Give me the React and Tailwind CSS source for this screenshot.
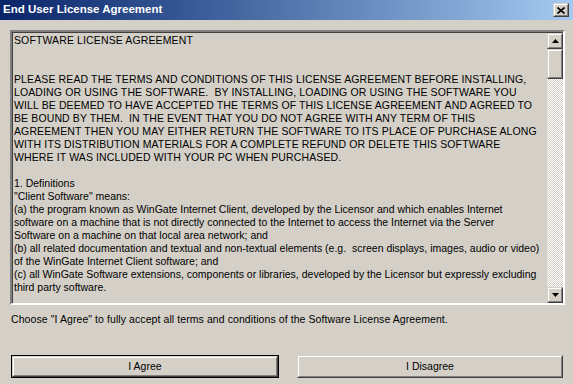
import React from 'react';

const licenseLines = [
  'SOFTWARE LICENSE AGREEMENT',
  '',
  '',
  'PLEASE READ THE TERMS AND CONDITIONS OF THIS LICENSE AGREEMENT BEFORE INSTALLING,',
  'LOADING OR USING THE SOFTWARE.  BY INSTALLING, LOADING OR USING THE SOFTWARE YOU',
  'WILL BE DEEMED TO HAVE ACCEPTED THE TERMS OF THIS LICENSE AGREEMENT AND AGREED TO',
  'BE BOUND BY THEM.  IN THE EVENT THAT YOU DO NOT AGREE WITH ANY TERM OF THIS',
  'AGREEMENT THEN YOU MAY EITHER RETURN THE SOFTWARE TO ITS PLACE OF PURCHASE ALONG',
  'WITH ITS DISTRIBUTION MATERIALS FOR A COMPLETE REFUND OR DELETE THIS SOFTWARE',
  'WHERE IT WAS INCLUDED WITH YOUR PC WHEN PURCHASED.',
  '',
  '1. Definitions',
  '"Client Software" means:',
  '(a) the program known as WinGate Internet Client, developed by the Licensor and which enables Internet',
  'software on a machine that is not directly connected to the Internet to access the Internet via the Server',
  'Software on a machine on that local area network; and',
  '(b) all related documentation and textual and non-textual elements (e.g.  screen displays, images, audio or video)',
  'of the WinGate Internet Client software; and',
  '(c) all WinGate Software extensions, components or libraries, developed by the Licensor but expressly excluding',
  'third party software.',
];

const Raised = ({ className = '', children }) => (
  <div className={`border border-t-[#d4d0c8] border-l-[#d4d0c8] border-b-[#404040] border-r-[#404040] ${className}`}>
    <div className="w-full h-full border border-t-white border-l-white border-b-[#808080] border-r-[#808080] bg-[#d4d0c8] flex items-center justify-center">
      {children}
    </div>
  </div>
);

const Arrow = ({ down }) => (
  <svg width="7" height="4" viewBox="0 0 7 4">
    {down ? <path d="M0 0h7L3.5 4z" fill="#000" /> : <path d="M0 4h7L3.5 0z" fill="#000" />}
  </svg>
);

const Button = ({ label, isDefault }) => (
  <div className={`flex-1 h-[23px] ${isDefault ? 'border border-black' : ''}`}>
    <Raised className="w-full h-full">
      <span className="text-[10.5px] text-black leading-none">{label}</span>
    </Raised>
  </div>
);

export default function App() {
  return (
    <div className="w-[573px] h-[384px] bg-[#d4d0c8] flex flex-col overflow-hidden font-['Liberation_Sans',Arial,sans-serif]">
      {/* Title bar */}
      <div className="h-[20px] shrink-0 bg-linear-to-r from-[#0a246a] to-[#a6caf0] flex items-center justify-between pl-[3px] pr-[4px]">
        <span className="text-white font-bold text-[11.5px] leading-none">End User License Agreement</span>
        <Raised className="w-[16px] h-[14px]">
          <svg width="8" height="7" viewBox="0 0 8 7">
            <path d="M0.5 0.5L7.5 6.5M7.5 0.5L0.5 6.5" stroke="#000" strokeWidth="1.6" />
          </svg>
        </Raised>
      </div>

      <div className="flex flex-col px-[10px] pt-[10px]">
        {/* License text box */}
        <div className="h-[275px] w-[555px] border-2 border-t-[#808080] border-l-[#808080] border-b-white border-r-white">
          <div className="h-full w-full flex">
            <div className="flex-1 border-t border-l border-t-[#404040] border-l-[#404040] pl-[1px] pt-[1px] overflow-hidden">
              <div className="text-[10.5px] leading-[13px] text-black">
                {licenseLines.map((line, i) => (
                  <div
                    key={i}
                    className={`h-[13px] whitespace-pre ${i < 11 ? 'tracking-[0.12px]' : ''}`}
                  >
                    {line}
                  </div>
                ))}
              </div>
            </div>
            {/* Scrollbar */}
            <div className="w-[16px] flex flex-col border-t border-t-[#404040]">
              <Raised className="w-[16px] h-[16px]"><Arrow /></Raised>
              <Raised className="w-[16px] h-[30px]" />
              <div className="flex-1 bg-[repeating-conic-gradient(#d4d0c8_0_25%,#ffffff_0_50%)] [background-size:2px_2px]" />
              <Raised className="w-[16px] h-[16px]"><Arrow down /></Raised>
            </div>
          </div>
        </div>

        <div className="mt-[8px] pl-[1px] text-[10.5px] leading-[13px] tracking-[0.08px] text-black">
          Choose "I Agree" to fully accept all terms and conditions of the Software License Agreement.
        </div>

        <div className="mt-[29px] flex gap-[18px] pl-[1px]">
          <Button label="I Agree" isDefault />
          <Button label="I Disagree" />
        </div>
      </div>
    </div>
  );
}
